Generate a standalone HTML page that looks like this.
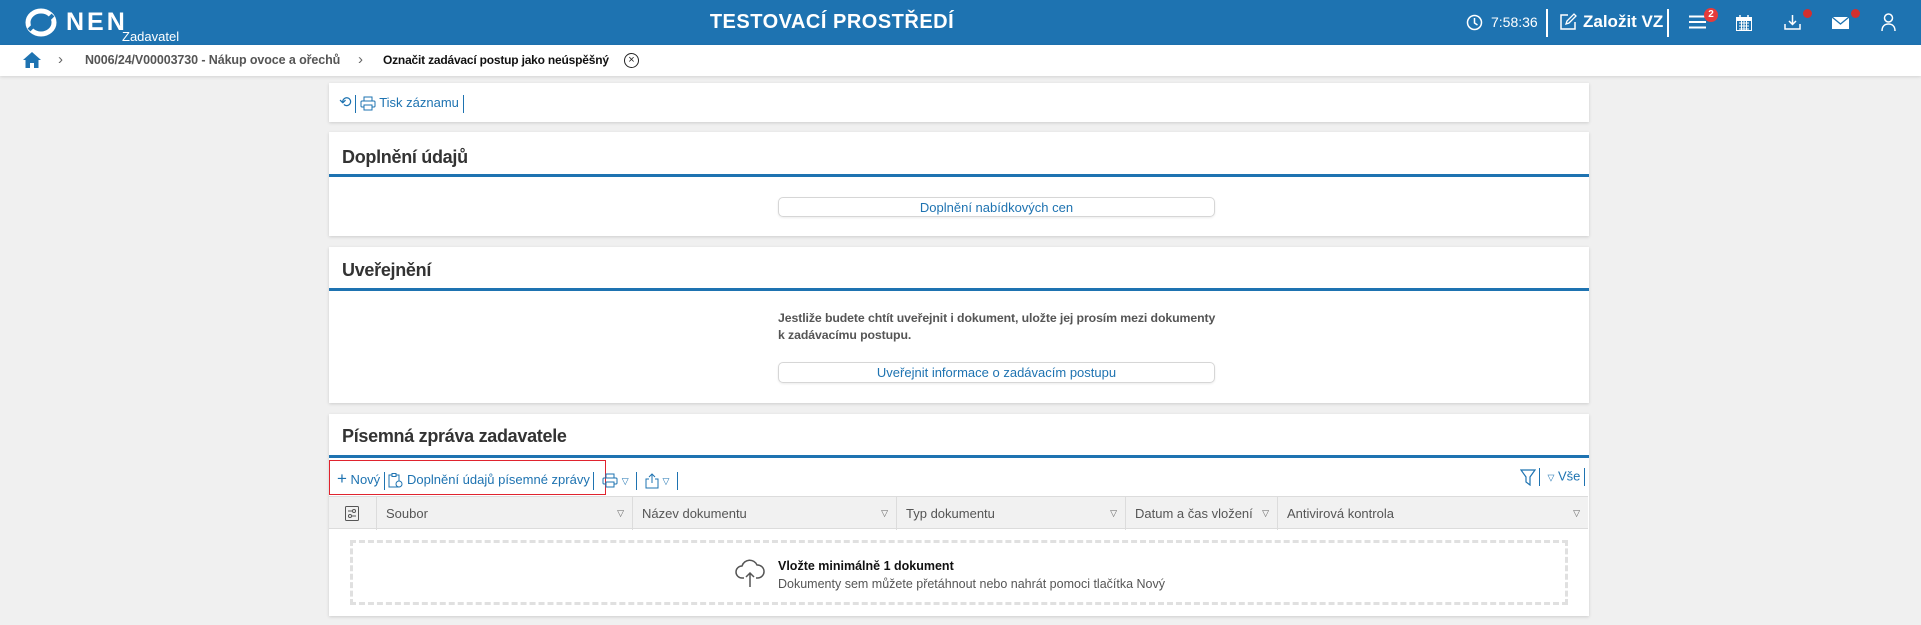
<!DOCTYPE html>
<html><head><meta charset="utf-8"><style>
*{box-sizing:border-box;margin:0;padding:0}
body{width:1921px;height:625px;overflow:hidden;background:#f0f0f0;font-family:"Liberation Sans",sans-serif;font-size:13px;color:#333;position:relative}
.abs{position:absolute}
.hdr{left:0;top:0;width:1921px;height:45px;background:#1e73b1;color:#fff}
.bc{left:0;top:45px;width:1921px;height:31px;background:#fff;box-shadow:0 1px 3px rgba(0,0,0,.12)}
.panel{position:absolute;left:329px;width:1260px;background:#fff;box-shadow:0 1px 3px rgba(0,0,0,.15)}
.title{position:absolute;left:13px;font-size:18px;font-weight:bold;color:#333;letter-spacing:-.3px}
.line{position:absolute;left:0;width:100%;height:3px;background:#1e73b1}
.btn{position:absolute;border:1px solid #d6d6d6;border-radius:5px;color:#1e73b1;text-align:center;font-size:13px;line-height:19px;box-shadow:0 1px 2px rgba(0,0,0,.08)}
.blue{color:#1e73b1}
.th{position:absolute;top:0;height:33px;line-height:33px;border-right:1px solid #dcdcdc;padding-left:9px;color:#555;font-size:13px}
.tri{position:absolute;right:8px;font-size:9px;color:#666}
.sep{display:inline-block;width:1px;height:18px;background:#1e73b1;vertical-align:middle}
</style></head><body>
<div class="abs hdr">
 <svg class="abs" style="left:25px;top:8px" width="32" height="29" viewBox="0 0 32 29"><ellipse cx="16" cy="14.5" rx="13" ry="11.5" fill="none" stroke="#fff" stroke-width="5"/><path d="M4 22 L10 16 M28 7 L22 13" stroke="#1e73b1" stroke-width="4"/></svg>
 <div class="abs" style="left:66px;top:8px;font-size:25px;font-weight:bold;letter-spacing:3px">NEN</div>
 <div class="abs" style="left:122px;top:29px;font-size:13px">Zadavatel</div>
 <div class="abs" style="left:0;width:1664px;top:11px;text-align:center;font-size:20px;font-weight:bold;letter-spacing:.5px">TESTOVACÍ PROSTŘEDÍ</div>
 <svg class="abs" style="left:1466px;top:14px" width="17" height="17" viewBox="0 0 17 17"><circle cx="8.5" cy="8.5" r="7" fill="none" stroke="#fff" stroke-width="1.5"/><path d="M8.5 4v5l3 2" fill="none" stroke="#fff" stroke-width="1.5"/></svg>
 <div class="abs" style="left:1491px;top:14px;font-size:14px">7:58:36</div>
 <div class="abs" style="left:1546px;top:9px;width:2px;height:28px;background:#fff"></div>
 <svg class="abs" style="left:1559px;top:13px" width="18" height="18" viewBox="0 0 18 18"><path d="M9 2H2v14h14V9" fill="none" stroke="#fff" stroke-width="1.5"/><path d="M7 11l1-3 7-7 2 2-7 7z" fill="none" stroke="#fff" stroke-width="1.3"/></svg>
 <div class="abs" style="left:1583px;top:12px;font-size:17px;font-weight:bold">Založit VZ</div>
 <div class="abs" style="left:1667px;top:9px;width:2px;height:28px;background:#fff"></div>
 <svg class="abs" style="left:1689px;top:15px" width="17" height="14" viewBox="0 0 17 14"><path d="M0 1.5h17M0 7h17M0 12.5h17" stroke="#fff" stroke-width="2"/></svg>
 <div class="abs" style="left:1704px;top:8px;width:14px;height:14px;border-radius:50%;background:#e43b3b;font-size:10px;font-weight:bold;text-align:center;line-height:14px">2</div>
 <svg class="abs" style="left:1736px;top:15px" width="16" height="16" viewBox="0 0 16 16"><rect x="0.5" y="2.5" width="15" height="13" fill="none" stroke="#fff"/><rect x="0" y="2" width="16" height="4" fill="#fff"/><path d="M4 0v3M12 0v3" stroke="#fff" stroke-width="1.5"/><path d="M3 8h10M3 11h10M3 14h10M5.5 6v9M8 6v9M10.5 6v9" stroke="#fff" stroke-width="1"/></svg>
 <svg class="abs" style="left:1784px;top:14px" width="17" height="17" viewBox="0 0 17 17"><path d="M8.5 1v9M5 7l3.5 3.5L12 7M1 10v5h15v-5" fill="none" stroke="#fff" stroke-width="1.5"/></svg>
 <div class="abs" style="left:1803px;top:9px;width:9px;height:9px;border-radius:50%;background:#d32f2f"></div>
 <svg class="abs" style="left:1832px;top:17px" width="17" height="12" viewBox="0 0 17 12"><rect width="17" height="12" fill="#fff"/><path d="M0 0l8.5 7L17 0" fill="none" stroke="#1e73b1" stroke-width="1.3"/></svg>
 <div class="abs" style="left:1851px;top:9px;width:9px;height:9px;border-radius:50%;background:#d32f2f"></div>
 <svg class="abs" style="left:1881px;top:13px" width="15" height="18" viewBox="0 0 15 18"><circle cx="7.5" cy="5" r="4" fill="none" stroke="#fff" stroke-width="1.5"/><path d="M1 18c0-5 3-7 6.5-7s6.5 2 6.5 7" fill="none" stroke="#fff" stroke-width="1.5"/></svg>
</div>
<div class="abs bc">
 <svg class="abs" style="left:23px;top:7px" width="18" height="16" viewBox="0 0 18 16"><path d="M9 0L0 8h2.5v8h4.5v-5h4v5h4.5V8H18z" fill="#1e73b1"/></svg>
 <div class="abs" style="left:58px;top:6px;color:#666;font-size:15px">&#x203A;</div>
 <div class="abs" style="left:85px;top:8px;color:#555;font-weight:bold;font-size:12.5px;letter-spacing:-.1px">N006/24/V00003730 - Nákup ovoce a ořechů</div>
 <div class="abs" style="left:358px;top:6px;color:#666;font-size:15px">&#x203A;</div>
 <div class="abs" style="left:383px;top:8px;color:#111;font-weight:bold;font-size:12px;letter-spacing:-.2px">Označit zadávací postup jako neúspěšný</div>
 <div class="abs" style="left:624px;top:8px;width:15px;height:15px;border:1.3px solid #222;border-radius:50%;font-size:11px;text-align:center;line-height:12px;color:#222">×</div>
</div>

<div class="panel" style="top:83px;height:39px">
 <div class="abs blue" style="left:10px;top:10px;font-size:13px;white-space:nowrap">
  <span style="font-size:15px">⟲</span> <span class="sep"></span> <svg width="16" height="15" viewBox="0 0 16 15" style="vertical-align:middle"><rect x="4" y="1" width="8" height="4" fill="none" stroke="#1e73b1"/><rect x="1" y="5" width="14" height="6" rx="1" fill="none" stroke="#1e73b1"/><rect x="4" y="9" width="8" height="5" fill="#fff" stroke="#1e73b1"/></svg> Tisk záznamu <span class="sep"></span>
 </div>
</div>

<div class="panel" style="top:132px;height:104px">
 <div class="title" style="top:15px">Doplnění údajů</div>
 <div class="line" style="top:42px"></div>
 <div class="btn" style="left:449px;top:65px;width:437px;height:20px">Doplnění nabídkových cen</div>
</div>

<div class="panel" style="top:247px;height:156px">
 <div class="title" style="top:13px">Uveřejnění</div>
 <div class="line" style="top:41px"></div>
 <div class="abs" style="left:449px;top:63px;color:#555;font-weight:bold;font-size:12.3px;line-height:17px;letter-spacing:-.1px">Jestliže budete chtít uveřejnit i dokument, uložte jej prosím mezi dokumenty<br>k zadávacímu postupu.</div>
 <div class="btn" style="left:449px;top:115px;width:437px;height:21px">Uveřejnit informace o zadávacím postupu</div>
</div>

<div class="panel" style="top:414px;height:202px">
 <div class="title" style="top:12px">Písemná zpráva zadavatele</div>
 <div class="line" style="top:41px"></div>
 <div class="abs" style="left:0;top:46px;width:277px;height:35px;border:1px solid #e0232e"></div>
 <div class="abs blue" style="left:8px;top:55px;font-size:13px;white-space:nowrap">
  <span style="font-size:17px;font-weight:300">+</span> Nový <span class="sep"></span> <svg width="15" height="15" viewBox="0 0 15 15" style="vertical-align:middle"><rect x="1" y="2" width="10" height="12" fill="none" stroke="#1e73b1"/><rect x="4" y="0.5" width="4" height="3" fill="#fff" stroke="#1e73b1"/><circle cx="11" cy="11" r="3" fill="#fff" stroke="#1e73b1"/></svg> Doplnění údajů písemné zprávy <span class="sep"></span>
  <svg width="16" height="15" viewBox="0 0 16 15" style="vertical-align:middle;margin-left:4px"><rect x="4" y="1" width="8" height="4" fill="none" stroke="#1e73b1"/><rect x="1" y="5" width="14" height="6" rx="1" fill="none" stroke="#1e73b1"/><rect x="4" y="9" width="8" height="5" fill="#fff" stroke="#1e73b1"/></svg> <span style="font-size:9px">▽</span> <span class="sep" style="margin-left:4px"></span>
  <svg width="14" height="16" viewBox="0 0 14 16" style="vertical-align:middle;margin-left:4px"><path d="M4 6H1v9h12V6h-3M7 10V1M4 4l3-3 3 3" fill="none" stroke="#1e73b1"/></svg> <span style="font-size:9px">▽</span> <span class="sep" style="margin-left:4px"></span>
 </div>
 <div class="abs blue" style="right:4px;top:54px;font-size:13px;white-space:nowrap">
  <svg width="16" height="17" viewBox="0 0 16 17" style="vertical-align:middle"><path d="M1 1h14l-5 7v8l-4-3V8z" fill="none" stroke="#1e73b1" stroke-width="1.2"/></svg> <span class="sep"></span> &nbsp;<span style="font-size:9px">▽</span> Vše <span class="sep"></span>
 </div>
 <div class="abs" style="left:0;top:82px;width:1259px;height:33px;background:#f1f1f1;border-top:1px solid #dcdcdc;border-bottom:1px solid #dcdcdc">
  <div class="th" style="left:0;width:48px;padding:0"><svg style="position:absolute;left:16px;top:9px" width="14" height="15" viewBox="0 0 14 15"><rect x="0.5" y="0.5" width="13" height="14" rx="1" fill="none" stroke="#555"/><path d="M3 5h8M3 10h8" stroke="#555"/><circle cx="9" cy="5" r="1.5" fill="#fff" stroke="#555"/><circle cx="5" cy="10" r="1.5" fill="#fff" stroke="#555"/></svg></div>
  <div class="th" style="left:48px;width:256px">Soubor<span class="tri">▽</span></div>
  <div class="th" style="left:304px;width:264px">Název dokumentu<span class="tri">▽</span></div>
  <div class="th" style="left:568px;width:229px">Typ dokumentu<span class="tri">▽</span></div>
  <div class="th" style="left:797px;width:152px">Datum a čas vložení<span class="tri">▽</span></div>
  <div class="th" style="left:949px;width:310px;border-right:none">Antivirová kontrola<span class="tri">▽</span></div>
 </div>
 <div class="abs" style="left:21px;top:126px;width:1218px;height:65px;border:3px dashed #e0e0e0"></div>
 <svg class="abs" style="left:406px;top:144px" width="30" height="30" viewBox="0 0 30 30"><path d="M9 20H7a6 6 0 0 1 0-12 8 8 0 0 1 15-1 6 6 0 0 1 1 13h-2" fill="none" stroke="#555" stroke-width="1.5"/><path d="M15 29V15M11 19l4-4 4 4" fill="none" stroke="#555" stroke-width="1.5"/></svg>
 <div class="abs" style="left:449px;top:145px;font-weight:bold;color:#111;font-size:12.5px">Vložte minimálně 1 dokument</div>
 <div class="abs" style="left:449px;top:163px;color:#555;font-size:12.5px">Dokumenty sem můžete přetáhnout nebo nahrát pomoci tlačítka Nový</div>
</div>
</body></html>
